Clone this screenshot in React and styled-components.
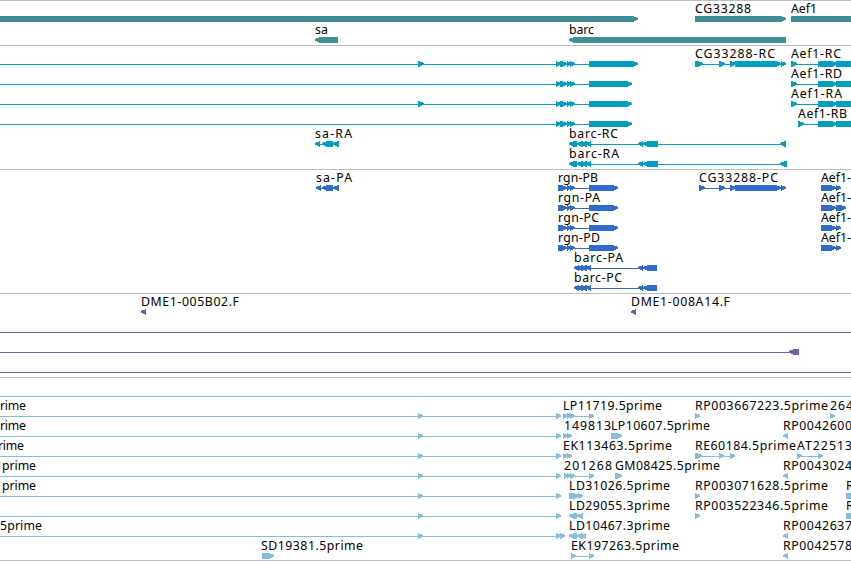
import React from 'react'
import styled, { createGlobalStyle } from 'styled-components'

const WIDTH = 851

// parts: [start, end], label: [text, start, end]
const genes = [
    {
        labels: [['CG33288', 695, 752], ['Aef1', 791, 818]],
        right: [[-20, 638], [695, 786], [791, 900]],
    },
    {
        labels: [['sa', 315, 329], ['barc', 569, 595]],
        left: [[315, 338], [569, 786]],
    },
]

const rgnStart = [[556, 561], [560, 567], [567, 571], [570, 575]]
const barcParts = [[569, 577], [577, 583], [581, 587], [586, 591], [638, 643], [643, 658]]

const transcripts = [
    {
        labels: [['CG33288-RC', 695, 776], ['Aef1-RC', 791, 842]],
        lines: [[0, 638], [695, 786], [791, 851]],
        right: [[418, 424], ...rgnStart, [589, 638], [695, 703], [719, 725], [730, 736], [735, 781], [781, 786], [791, 797], [818, 822], [820, 837], [836, 900]],
    },
    {
        labels: [['Aef1-RD', 791, 843]],
        lines: [[0, 632], [791, 851]],
        right: [...rgnStart, [589, 632], [791, 797], [818, 837], [836, 900]],
    },
    {
        labels: [['Aef1-RA', 791, 843]],
        lines: [[0, 632], [791, 851]],
        right: [[418, 424], ...rgnStart, [589, 632], [791, 797], [818, 837], [836, 900]],
    },
    {
        labels: [['Aef1-RB', 798, 848]],
        lines: [[0, 632], [798, 851]],
        right: [...rgnStart, [589, 632], [798, 804], [818, 837], [836, 900]],
    },
    {
        labels: [['sa-RA', 315, 353], ['barc-RC', 569, 619]],
        lines: [[315, 339], [569, 786]],
        left: [[315, 320], [322, 333], [333, 339], ...barcParts, [780, 786]],
    },
    {
        labels: [['barc-RA', 569, 620]],
        lines: [[569, 787]],
        left: [...barcParts, [780, 787]],
    },
]

const rgnCds = [[558, 567], [567, 571], [570, 575], [589, 618]]
const barcCds = [[574, 579], [577, 583], [581, 587], [586, 591], [638, 643], [643, 657]]

const proteins = [
    {
        labels: [['sa-PA', 316, 353], ['rgn-PB', 558, 599], ['CG33288-PC', 699, 779], ['Aef1-', 821, 852]],
        lines: [[316, 339], [558, 618], [699, 786], [821, 841]],
        left: [[316, 321], [322, 333], [333, 339]],
        right: [...rgnCds, [699, 705], [719, 725], [730, 736], [735, 781], [781, 786], [821, 836], [836, 841]],
    },
    {
        labels: [['rgn-PA', 558, 601], ['Aef1-', 821, 852]],
        lines: [[558, 618], [821, 846]],
        right: [...rgnCds, [821, 836], [836, 846]],
    },
    {
        labels: [['rgn-PC', 558, 600], ['Aef1-', 821, 852]],
        lines: [[558, 618], [821, 841]],
        right: [...rgnCds, [821, 836], [836, 841]],
    },
    {
        labels: [['rgn-PD', 558, 601], ['Aef1-', 821, 852]],
        lines: [[558, 618], [821, 841]],
        right: [...rgnCds, [821, 836], [836, 841]],
    },
    { labels: [['barc-PA', 574, 624]], lines: [[574, 657]], left: barcCds },
    { labels: [['barc-PC', 574, 623]], lines: [[574, 657]], left: barcCds },
]

const clones = [
    {
        labels: [['DME1-005B02.F', 141, 240], ['DME1-008A14.F', 631, 731]],
        left: [[141, 146], [631, 636]],
    },
    { lines: [[0, 851]] },
    { lines: [[0, 799]], left: [[789, 799]] },
    { lines: [[0, 851]] },
]

const ests = [
    { lines: [[0, 851]] },
    {
        labels: [['rime', 0, 27], ['LP11719.5prime', 563, 663], ['RP003667223.5prime', 695, 829], ['264', 830, 854]],
        lines: [[0, 561], [563, 594]],
        right: [[418, 423], [556, 561], [563, 568], [567, 571], [570, 575], [589, 594], [695, 700], [830, 835]],
    },
    {
        labels: [['rime', 0, 27], ['149813', 564, 612], ['LP10607.5prime', 611, 711], ['RP0042600', 783, 853]],
        lines: [[0, 561], [563, 572]],
        right: [[418, 423], [556, 561], [563, 568], [567, 572], [611, 622]],
        left: [[783, 788]],
    },
    {
        labels: [['rime', -2, 25], ['EK113463.5prime', 563, 673], ['RE60184.5prime', 695, 797], ['AT22513', 797, 853]],
        lines: [[0, 561], [563, 572], [695, 735], [797, 823]],
        right: [[418, 423], [556, 561], [563, 568], [567, 572], [695, 702], [719, 724], [730, 735], [797, 802], [818, 823]],
    },
    {
        labels: [['prime', 2, 37], ['201268', 564, 613], ['GM08425.5prime', 615, 721], ['RP0043024', 783, 853]],
        lines: [[0, 561], [564, 594]],
        right: [[418, 423], [556, 561], [564, 568], [567, 571], [570, 575], [589, 594], [615, 622]],
        left: [[783, 788]],
    },
    {
        labels: [['prime', 2, 37], ['LD31026.5prime', 569, 671], ['RP003071628.5prime', 695, 829], ['R', 846, 854]],
        lines: [[0, 561], [569, 583]],
        right: [[418, 423], [556, 561], [569, 579], [578, 583], [695, 700], [846, 900]],
    },
    {
        labels: [['LD29055.3prime', 569, 671], ['RP003522346.5prime', 695, 829], ['R', 846, 854]],
        lines: [[0, 561], [569, 583]],
        right: [[418, 423], [556, 561], [695, 700], [846, 900]],
        left: [[569, 577], [577, 583]],
    },
    {
        labels: [['5prime', 0, 43], ['LD10467.3prime', 569, 671], ['RP0042637', 783, 853]],
        lines: [[0, 565], [569, 586]],
        right: [[418, 423], [556, 561], [560, 565]],
        left: [[569, 577], [577, 583], [581, 586], [783, 788]],
    },
    {
        labels: [['SD19381.5prime', 261, 364], ['EK197263.5prime', 571, 680], ['RP0042578', 783, 853]],
        lines: [[571, 594]],
        right: [[262, 274], [571, 576], [589, 594]],
        left: [[783, 788]],
    },
]

const tracks = [
    { name: 'genes', color: '#3f8f95', gap: 1, rows: genes },
    { name: 'transcripts', color: '#049fc0', rows: transcripts },
    { name: 'proteins', color: '#316bcb', rows: proteins },
    { name: 'clones', color: '#7759a8', rows: clones },
    { name: 'ests', color: '#86bcde', rows: ests },
]

function arrowPoints(start, end, forward) {
    const head = Math.min(5, end - start)
    if (forward) {
        return `${start},13 ${end - head},13 ${end},15 ${end},16.4 ${end - head},19 ${start},19`
    }
    return `${end},13 ${start + head},13 ${start},15 ${start},16.4 ${start + head},19 ${end},19`
}

function FeatureRow({ labels = [], lines = [], right = [], left = [] }) {
    return (
        <RowChart width={WIDTH} height={20}>
            {lines.map(([start, end]) => (
                <Intron key={start} x={start} y={16} width={end - start} height={1} />
            ))}
            {right.map(([start, end]) => (
                <Exon key={start} points={arrowPoints(start, end, true)} />
            ))}
            {left.map(([start, end]) => (
                <Exon key={start} points={arrowPoints(start, end, false)} />
            ))}
            {labels.map(([text, start, end]) => (
                <Label key={text + start} x={start} y={10} textLength={end - start - 1}>{text}</Label>
            ))}
        </RowChart>
    )
}

function App() {
    return (
        <>
            <GlobalStyle />
            <Browser>
                {tracks.map((track) => (
                    <Track key={track.name} $color={track.color} $gap={track.gap}>
                        {track.rows.map((row, i) => (
                            <FeatureRow key={i} {...row} />
                        ))}
                    </Track>
                ))}
            </Browser>
        </>
    )
}

const GlobalStyle = createGlobalStyle`
    body{
        margin: 0;
        background: #fff;
        overflow: hidden;
    }
`

const Browser = styled.main`
    display: flex;
    flex-direction: column;
    width: ${WIDTH}px;
    border-bottom: 1px solid #bebebe;
    overflow: hidden;
`

const Track = styled.section`
    display: flex;
    flex-direction: column;
    gap: ${(props) => props.$gap || 0}px;
    padding: 2px 0 1px;
    border-top: 1px solid #bebebe;
    color: ${(props) => props.$color};

    &:last-child{
        padding-bottom: 0;
    }
`

const RowChart = styled.svg`
    display: block;
    flex: none;
    overflow: visible;
`

const Intron = styled.rect`
    fill: currentColor;
    shape-rendering: crispEdges;
`

const Exon = styled.polygon`
    fill: currentColor;
    shape-rendering: crispEdges;
`

const Label = styled.text`
    fill: #000;
    font-family: "Noto Sans", "Open Sans", sans-serif;
    font-size: 12.3px;
`

export default App
